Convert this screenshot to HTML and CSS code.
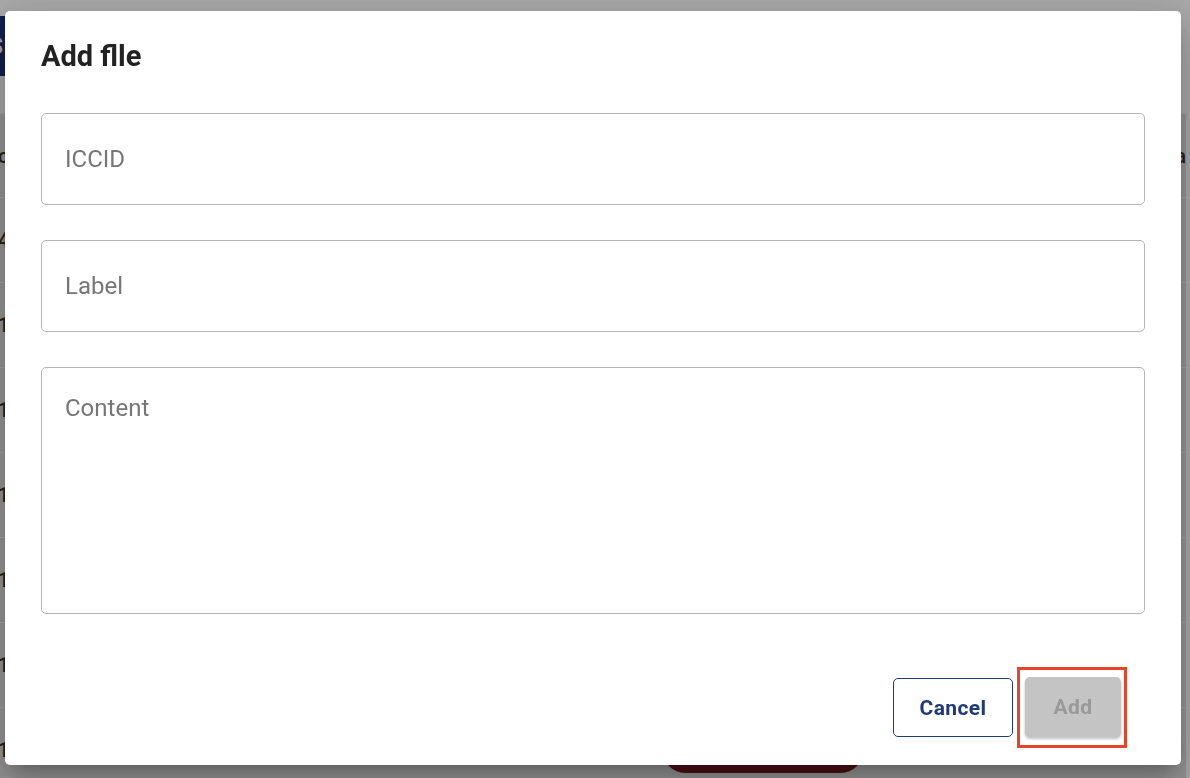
FILE: index.html
```html
<!DOCTYPE html>
<html lang="en">
<head>
    <meta charset="UTF-8">
    <meta name="viewport" content="width=device-width, initial-scale=1.0">
    <title>Add file</title>
    <link rel="stylesheet" href="styles.css">
</head>
<body>
    <div class="page">
        <header class="topbar">
            <button class="nav-button">SIMS</button>
        </header>

        <table class="sims">
            <thead>
                <tr>
                    <th class="first">cid</th>
                    <th class="last">a</th>
                </tr>
            </thead>
            <tbody>
                <tr><td class="first">4</td><td class="last"></td></tr>
                <tr><td class="first">1</td><td class="last"></td></tr>
                <tr><td class="first">1</td><td class="last"></td></tr>
                <tr><td class="first">1</td><td class="last"></td></tr>
                <tr><td class="first">1</td><td class="last"></td></tr>
                <tr><td class="first">1</td><td class="last"></td></tr>
                <tr><td class="first">1</td><td class="last"></td></tr>
            </tbody>
        </table>

        <button class="fab">Delete</button>
    </div>

    <div class="backdrop">
        <form class="dialog">
            <h2 class="dialog-title">Add flle</h2>

            <input type="text" class="field" placeholder="ICCID">
            <input type="text" class="field" placeholder="Label">
            <textarea class="field area" placeholder="Content"></textarea>

            <div class="actions">
                <button type="button" class="btn cancel">Cancel</button>
                <div class="highlight">
                    <button type="submit" class="btn add" disabled>Add</button>
                </div>
            </div>
        </form>
    </div>
</body>
</html>
```

FILE: styles.css
```css
* {
    margin: 0;
    padding: 0;
    box-sizing: border-box;
}
body {
    font-family: Roboto, "Liberation Sans", sans-serif;
    background-color: #fff;
    overflow: hidden;
    height: 778px;
}
.page {
    position: relative;
    height: 778px;
}
.topbar {
    height: 113px;
    padding-top: 16px;
}
.nav-button {
    width: 125px;
    height: 60px;
    margin-left: -120px;
    background-color: #172f79;
    color: #fff;
    border: none;
    font-family: Roboto, sans-serif;
    font-size: 24px;
    font-weight: bold;
    text-align: right;
    padding-right: 2px;
}
table.sims {
    width: 1200px;
    margin-left: -14px;
    border-collapse: collapse;
    background-color: #e2e2e2;
}
table.sims th, table.sims td {
    height: 85px;
    border-bottom: 1px solid #f6f6f6;
    font-size: 20px;
    color: #333;
    text-align: left;
    font-weight: 500;
}
table.sims th {
    height: 84px;
    border-top: 1px solid #f6f6f6;
}
table.sims .first {
    width: 1195px;
    padding-left: 12px;
}
table.sims .last {
    padding-left: 0;
}
.fab {
    position: absolute;
    left: 663px;
    bottom: 5px;
    width: 200px;
    height: 56px;
    border: none;
    border-radius: 22px;
    background-color: #76181e;
    color: #fff;
    font-size: 18px;
}
.backdrop {
    position: fixed;
    inset: 0;
    background-color: rgba(0, 0, 0, 0.34);
    display: flex;
    align-items: flex-start;
    padding: 11px 0 0 5px;
}
.dialog {
    width: 1176px;
    height: 754px;
    background-color: #fff;
    border-radius: 5px;
    padding: 28px 36px 0 36px;
    display: flex;
    flex-direction: column;
    box-shadow: 0 11px 15px -7px rgba(0, 0, 0, 0.2),
                0 24px 38px 3px rgba(0, 0, 0, 0.14),
                0 9px 46px 8px rgba(0, 0, 0, 0.12);
}
.dialog-title {
    font-size: 29px;
    line-height: 34px;
    font-weight: bold;
    color: #222;
    margin-bottom: 40px;
}
.field {
    width: 100%;
    height: 92px;
    border: 1px solid #b4b4b4;
    border-radius: 5px;
    padding: 0 23px;
    font-family: Roboto, sans-serif;
    font-size: 24px;
    color: #222;
    margin-bottom: 35px;
    outline: none;
}
.field::placeholder {
    color: #767676;
}
.area {
    height: 247px;
    padding-top: 26px;
    line-height: 28px;
    resize: none;
    margin-bottom: 53px;
}
.actions {
    display: flex;
    justify-content: flex-end;
    align-items: center;
    gap: 4px;
    margin-right: 18px;
}
.btn {
    height: 60px;
    border-radius: 5px;
    font-family: Roboto, sans-serif;
    font-size: 21px;
    letter-spacing: 0.4px;
    font-weight: bold;
    cursor: pointer;
}
.cancel {
    width: 120px;
    height: 59px;
    background-color: #fff;
    border: 1px solid #1f3a7a;
    color: #1f3a7a;
}
.highlight {
    border: 3px solid #e8432b;
    padding: 7px 3px 8px 5px;
}
.add {
    width: 96px;
    background-color: #c4c4c4;
    color: #999;
    border: none;
    box-shadow: 0 2px 3px rgba(0, 0, 0, 0.25);
}
```
